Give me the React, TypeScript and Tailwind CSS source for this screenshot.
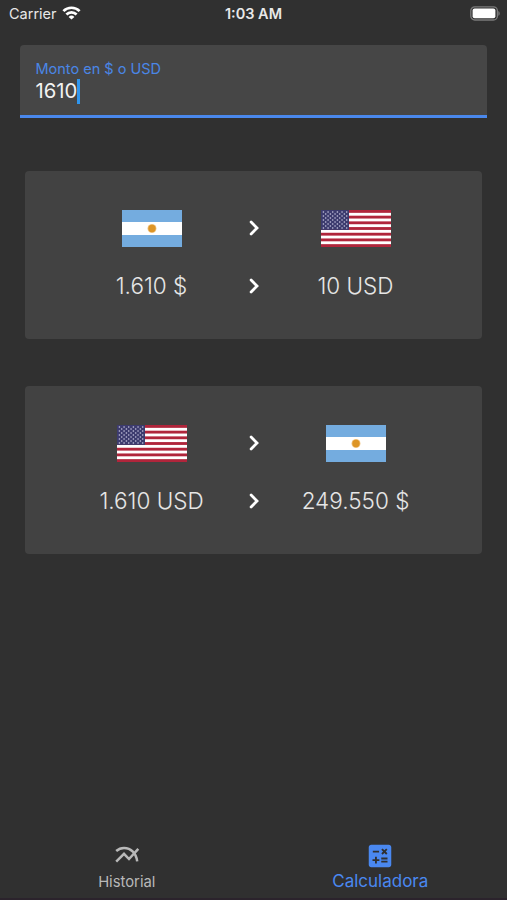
import { MdCalculate } from "react-icons/md";

interface Conversion {
  from: "ARS" | "USD";
  to: "ARS" | "USD";
  fromAmount: string;
  toAmount: string;
}

const conversions: Conversion[] = [
  { from: "ARS", to: "USD", fromAmount: "1.610 $", toAmount: "10 USD" },
  { from: "USD", to: "ARS", fromAmount: "1.610 USD", toAmount: "249.550 $" },
];

function ArgentinaFlag() {
  return (
    <svg width="60" height="37" viewBox="0 0 60 37">
      <rect width="60" height="37" fill="#74acdf" />
      <rect y="12" width="60" height="13" fill="#fff" />
      <circle cx="30" cy="18.5" r="4.5" fill="#f3c98a" />
      <circle cx="30" cy="18.5" r="3.7" fill="#dd9526" />
    </svg>
  );
}

function UsaFlag() {
  const stripe = 37 / 13;
  return (
    <svg width="70" height="37" viewBox="0 0 70 37">
      <rect width="70" height="37" fill="#fff" />
      {[0, 2, 4, 6, 8, 10, 12].map((i) => (
        <rect key={i} y={i * stripe} width="70" height={stripe} fill="#b0253b" />
      ))}
      <rect width="28" height={stripe * 7} fill="#3c3b6e" />
      {Array.from({ length: 9 }, (_, row) =>
        Array.from({ length: row % 2 ? 5 : 6 }, (_, col) => (
          <circle
            key={`${row}-${col}`}
            cx={2.4 + col * 4.66 + (row % 2 ? 2.33 : 0)}
            cy={2 + row * 2}
            r="0.8"
            fill="#c9c8e0"
          />
        ))
      )}
    </svg>
  );
}

function Chevron() {
  return (
    <svg width="30" height="30" viewBox="0 0 30 30" fill="none" stroke="#fff" strokeWidth="2.8" strokeLinecap="round" strokeLinejoin="miter">
      <path d="M12.1 9.1 18 15l-5.9 5.9" />
    </svg>
  );
}

function HistoryIcon() {
  return (
    <svg className="mt-px" width="28" height="28" viewBox="0 0 28 28" fill="none" stroke="currentColor" strokeWidth="2.5">
      <path d="M3.2 9C5.4 7 8.2 5.9 11 5.9c7 0 12.3 5.6 13.2 13.5" />
      <path d="M3.2 19.6 11 11.8l5 5.2L25.3 6.8" />
    </svg>
  );
}

function ConversionCard({ from, to, fromAmount, toAmount }: Conversion) {
  return (
    <div className="h-[168px] rounded bg-[#424242] pt-[28px]">
      <div className="grid grid-cols-[124px_80px_124px] grid-rows-[58px_58px] place-content-center place-items-center text-[22.5px] font-[340] text-[#e6e6e6] whitespace-nowrap h-[116px]">
        {from === "ARS" ? <ArgentinaFlag /> : <UsaFlag />}
        <Chevron />
        {to === "ARS" ? <ArgentinaFlag /> : <UsaFlag />}
        <span>{fromAmount}</span>
        <Chevron />
        <span>{toAmount}</span>
      </div>
    </div>
  );
}

function StatusBar() {
  return (
    <div className="grid h-7 grid-cols-3 items-center px-[7px] text-[14.5px] text-[#e8e8e8]">
      <div className="flex items-center gap-[5px] pl-[2px]">
        <span>Carrier</span>
        <svg className="-mt-[2px]" width="19" height="14" viewBox="0 0 18 14" fill="none" stroke="#fff" strokeWidth="2.7">
          <path d="M0.9 5.1a11.5 11.5 0 0 1 16.2 0" />
          <path d="M3.9 8.5a7.2 7.2 0 0 1 10.2 0" />
          <path d="M9 13.6 6.1 10.9a4.1 4.1 0 0 1 5.8 0z" fill="#fff" stroke="none" />
        </svg>
      </div>
      <span className="pb-px text-center text-[14.5px] font-semibold">1:03 AM</span>
      <svg className="-mt-[2px] justify-self-end" width="30" height="15" viewBox="0 0 30 15">
        <rect x="0.8" y="0.8" width="26.6" height="13.2" rx="4" fill="none" stroke="#7a7a7a" strokeWidth="1.3" />
        <rect x="2.6" y="2.6" width="22.8" height="9.6" rx="2" fill="#fff" />
        <path d="M28.3 5v4.8c1.9-.7 1.9-4.1 0-4.8z" fill="#7a7a7a" />
      </svg>
    </div>
  );
}

export default function App() {
  return (
    <div className="flex h-[900px] w-[507px] flex-col overflow-hidden bg-[#303030] font-['Inter',sans-serif]">
      <StatusBar />

      {/* Amount field */}
      <div className="mt-[17px] mx-[20px] h-[73px] rounded-t border-b-[3px] border-[#4a88ec] bg-[#464646] pl-[15.5px] pt-[14px]">
        <p className="text-[14.5px] leading-[19px] text-[#4a86e6]">Monto en $ o USD</p>
        <div className="flex h-[26px] items-center text-[20.3px] text-[#f2f2f2]">
          <span>1610</span>
          <span className="h-[25px] w-[2.5px] bg-[#2f96ee]" />
        </div>
      </div>

      <div className="mx-[25px] mt-[53px] flex flex-col gap-[47px]">
        {conversions.map((c) => (
          <ConversionCard key={c.from} {...c} />
        ))}
      </div>

      {/* Bottom navigation */}
      <nav className="mt-auto grid h-[57px] grid-cols-2">
        <div className="flex flex-col items-center text-[14.8px] text-[#b9b9b9]">
          <HistoryIcon />
          <span className="leading-[24px]">Historial</span>
        </div>
        <div className="flex flex-col items-center text-[17px] text-[#4a88f0]">
          <MdCalculate size={30} />
          <span className="leading-[20px]">Calculadora</span>
        </div>
      </nav>
      <div className="h-[2px] bg-[#2b232c]" />
    </div>
  );
}
